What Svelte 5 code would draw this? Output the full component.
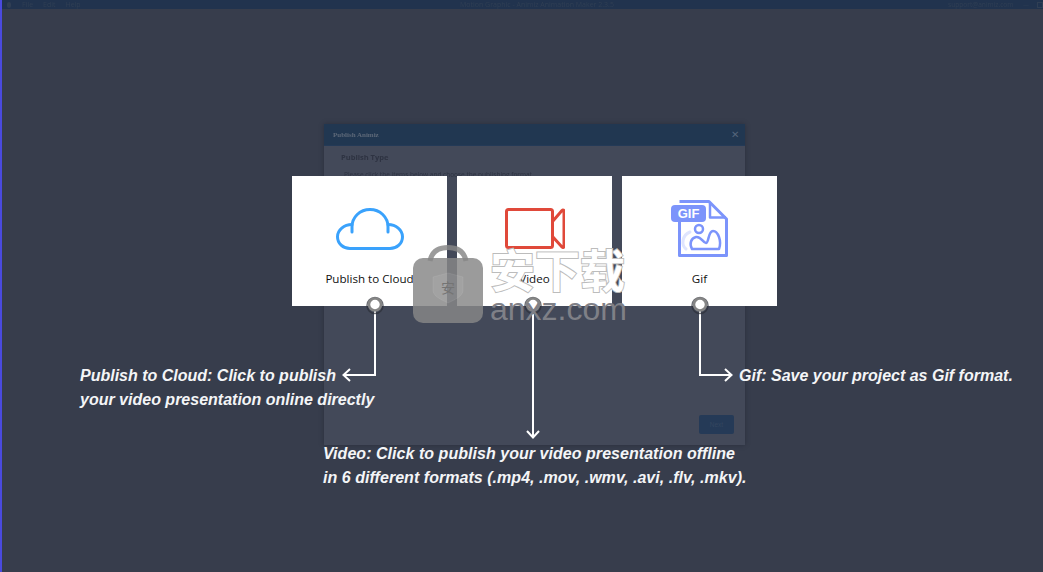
<script lang="ts">
  const menus = ['File', 'Edit', 'Help'];
  const cards = [
    { label: 'Publish to Cloud', icon: 'cloud' },
    { label: 'Video', icon: 'video' },
    { label: 'Gif', icon: 'gif' },
  ];
  const pins = [375, 533, 700];
</script>

<div class="app">
  <header class="titlebar">
    <span class="logo"></span>
    <nav class="menus">
      {#each menus as menu}
        <span>{menu}</span>
      {/each}
    </nav>
    <span class="doc-title">Motion Graphic - Animiz Animation Maker 2.3.5</span>
    <span class="support">support@animiz.com</span>
    <span class="win-btn">—</span>
    <span class="win-btn square"></span>
  </header>

  <main class="stage">
    <section class="dialog">
      <div class="dialog-head">
        <span class="dialog-title">Publish Animiz</span>
        <span class="dialog-close">✕</span>
      </div>
      <div class="dialog-body">
        <h2>Publish Type</h2>
        <p>Please click the items below and choose the publishing format.</p>
        <button class="next">Next</button>
      </div>
    </section>
  </main>

  <div class="cards">
    {#each cards as card}
      <div class="card">
        <div class="card-icon">
          {#if card.icon === 'cloud'}
            <svg width="68" height="42" viewBox="0 0 68 42" fill="none" stroke="#3aa2fc" stroke-width="3" stroke-linecap="round" stroke-linejoin="round">
              <path d="M16 24V19C16 9 24 1.5 34 1.5S52 9 52 19V24" />
              <path d="M16 16.5C8 16.5 1.5 22 1.5 28.7S7 40.5 14 40.5H54C61 40.5 66.5 35.5 66.5 28.7S60 16.5 52 16.5" />
            </svg>
          {:else if card.icon === 'video'}
            <svg width="60" height="42" viewBox="0 0 60 42" fill="none" stroke="#e0493a" stroke-width="3" stroke-linejoin="round">
              <rect x="1.5" y="1.5" width="46" height="38" rx="2" />
              <path d="M47.5 13.5L57 2.5C58 1.5 59 2 59 3.5V38C59 39.5 58 40 57 39L47.5 28.5" />
            </svg>
          {:else}
            <svg class="gif" width="58" height="58" viewBox="0 0 58 58" fill="none">
              <path d="M8.5 1.500H38L55.500 19V55.500H8.500V22" stroke="#7c94fb" stroke-width="3" stroke-linejoin="round" />
              <path d="M39 3V17.500H55" stroke="#7c94fb" stroke-width="2.500" stroke-linejoin="round" />
              <rect x="0" y="5" width="35" height="17" rx="4" fill="#7c94fb" />
              <text x="17.500" y="18" class="gif-text">GIF</text>
              <path d="M15 49C10 45 11 35 19 32" stroke="#dfe5fe" stroke-width="3" stroke-linecap="round" />
              <circle cx="28" cy="29" r="4" stroke="#7c94fb" stroke-width="2.500" />
              <path d="M21 49C18 44 20 38 25 37C30 36 32 43 35 43C38 43 37 31 42 31C47 31 51 41 48 49Z" stroke="#7c94fb" stroke-width="2.500" stroke-linejoin="round" />
            </svg>
          {/if}
        </div>
        <span class="card-label">{card.label}</span>
      </div>
    {/each}
  </div>

  <svg class="connectors" width="1043" height="572" viewBox="0 0 1043 572" fill="none">
    <g stroke="#fff" stroke-width="2">
      <path d="M375 311V375H344" />
      <path d="M350 369L343.500 375L350 381" />
      <path d="M533 311V436" />
      <path d="M527 431L533 437.500L539 431" />
      <path d="M700 311V375H731" />
      <path d="M725 369L731.500 375L725 381" />
    </g>
    {#each pins as x}
      <circle cx={x} cy="305.500" r="8" fill="none" stroke="#2c2f38" stroke-width="1.500" opacity="0.7" />
      <circle cx={x} cy="304.500" r="6" fill="#fff" stroke="#858585" stroke-width="2.500" />
    {/each}
  </svg>

  <p class="note note-cloud">Publish to Cloud: Click to publish<br />your video presentation online directly</p>
  <p class="note note-video">Video: Click to publish your video presentation offline<br />in 6 different formats (.mp4, .mov, .wmv, .avi, .flv, .mkv).</p>
  <p class="note note-gif">Gif: Save your project as Gif format.</p>

  <div class="watermark">
    <svg class="bag" width="70" height="80" viewBox="0 0 70 80">
      <path d="M17 16C19 5 27 2.500 35 2.500S51 5 53 16" fill="none" stroke="#878787" stroke-opacity="0.83" stroke-width="5" />
      <rect x="0" y="13" width="70" height="65" rx="10" fill="#878787" fill-opacity="0.83" />
      <path d="M20 32L35 28L50 32V45C50 51 43 54 35 58C27 54 20 51 20 45Z" fill="#fff" fill-opacity="0.07" stroke="#fff" stroke-opacity="0.08" />
      <text x="35" y="48" class="bag-text">安</text>
    </svg>
    <div class="wm-text">
      <span class="wm-cn">安下载</span>
      <span class="wm-en">anxz.com</span>
    </div>
  </div>
</div>

<style>
  :global(body) {
    margin: 0;
    background: #373d4c;
  }

  .app {
    position: relative;
    width: 1043px;
    height: 572px;
    overflow: hidden;
    display: flex;
    flex-direction: column;
    box-sizing: border-box;
    border-left: 2px solid #4a4ade;
    background: #373d4c;
    font-family: "Liberation Sans", Arial, sans-serif;
  }

  .titlebar {
    flex: none;
    height: 9px;
    display: flex;
    align-items: center;
    padding-left: 5px;
    background: #21334e;
    color: #303f54;
    font-size: 7px;
    font-family: "Open Sans", sans-serif;
    overflow: hidden;
  }

  .titlebar span {
    flex: none;
    filter: blur(0.35px);
  }

  .logo {
    width: 4px;
    height: 6px;
    background: #303f54;
    border-radius: 2px;
  }

  .menus {
    display: flex;
    gap: 10px;
    margin-left: 11px;
    width: 400px;
    flex: none;
  }

  .doc-title {
    width: 526px;
    padding-left: 38px;
    box-sizing: border-box;
  }

  .support {
    width: 75px;
    font-size: 6.600px;
  }

  .win-btn {
    width: 14px;
    font-size: 6px;
  }

  .win-btn.square::before {
    content: '';
    display: block;
    width: 4px;
    height: 4px;
    border: 1px solid #303f54;
  }

  .stage {
    flex: 1;
    padding: 115px 0 0 322px;
  }

  .dialog {
    width: 421px;
    height: 321px;
    display: flex;
    flex-direction: column;
    background: #434959;
    box-shadow: 0 0 4px rgba(30, 33, 45, 0.5);
  }

  .dialog-head {
    flex: none;
    height: 22px;
    display: flex;
    align-items: center;
    justify-content: space-between;
    padding: 0 6px 0 9px;
    background: #213751;
    border-bottom: 1px solid #243a57;
    box-sizing: border-box;
    color: #5d6878;
  }

  .dialog-title {
    font-family: "Liberation Serif", serif;
    font-size: 7px;
    font-weight: bold;
    filter: blur(0.35px);
  }

  .dialog-close {
    font-size: 10px;
    line-height: 10px;
    color: #55657b;
  }

  .dialog-body {
    flex: 1;
    position: relative;
    padding: 6px 17px;
    color: #2e3342;
    font-family: "Open Sans", sans-serif;
  }

  .dialog-body h2 {
    margin: 0;
    font-size: 7.500px;
    line-height: 11px;
    font-weight: 700;
    filter: blur(0.3px);
  }

  .dialog-body p {
    margin: 7px 0 0 3px;
    font-size: 6.500px;
    line-height: 9px;
    filter: blur(0.3px);
  }

  .next {
    position: absolute;
    right: 11px;
    bottom: 11px;
    width: 35px;
    height: 19px;
    border: none;
    border-radius: 2px;
    background: #253a57;
    color: #34465f;
    font-size: 6.500px;
    padding: 0;
  }

  .cards {
    position: absolute;
    left: 290px;
    top: 176px;
    display: flex;
    gap: 10px;
  }

  .card {
    width: 155px;
    height: 130px;
    background: #fff;
    display: flex;
    flex-direction: column;
    align-items: center;
  }

  .card-icon {
    height: 94px;
    display: flex;
    align-items: flex-end;
    padding-bottom: 20px;
    box-sizing: border-box;
  }

  .card-icon svg {
    display: block;
  }

  .card-icon .gif {
    margin-bottom: -8px;
  }

  .gif-text {
    fill: #fff;
    font-family: "Liberation Sans", Arial, sans-serif;
    font-size: 13px;
    font-weight: bold;
    text-anchor: middle;
  }

  .card-label {
    margin-top: 1px;
    font-family: "Open Sans", sans-serif;
    font-size: 11.600px;
    line-height: 16px;
    color: #111;
  }

  .connectors {
    position: absolute;
    left: -2px;
    top: 0;
    pointer-events: none;
  }

  .note {
    position: absolute;
    margin: 0;
    color: #f4f5f7;
    font-size: 16px;
    font-weight: bold;
    font-style: italic;
    line-height: 24px;
    white-space: nowrap;
  }

  .note-cloud {
    left: 78px;
    top: 364px;
  }

  .note-video {
    left: 321px;
    top: 442px;
    letter-spacing: 0.04px;
  }

  .note-gif {
    left: 737px;
    top: 364px;
  }

  .watermark {
    position: absolute;
    left: 411px;
    top: 245px;
    display: flex;
    gap: 7px;
  }

  .bag {
    display: block;
  }

  .bag-text {
    fill: #747474;
    font-family: "Noto Sans CJK SC", sans-serif;
    font-size: 14px;
    text-anchor: middle;
  }

  .wm-text {
    display: flex;
    flex-direction: column;
    align-items: flex-start;
  }

  .wm-cn {
    font-family: "Noto Sans CJK SC", sans-serif;
    font-size: 45px;
    line-height: 48px;
    font-weight: 700;
    color: #fff;
    -webkit-text-stroke: 2px #bcbcbc;
    paint-order: stroke fill;
    white-space: nowrap;
  }

  .wm-en {
    font-family: "Liberation Sans", Arial, sans-serif;
    font-size: 32px;
    line-height: 32px;
    color: #7f8087;
    white-space: nowrap;
  }
</style>
